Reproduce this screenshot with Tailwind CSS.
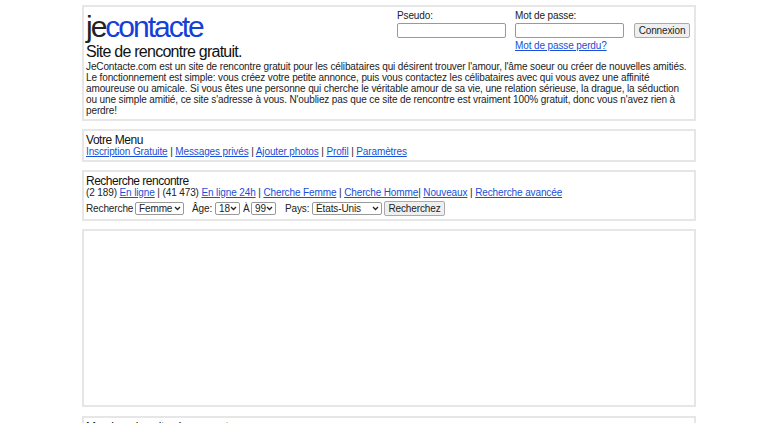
<!DOCTYPE html>
<html lang="fr">
  <head>
    <meta charset="UTF-8" />
    <title>JeContacte - Site de rencontre gratuit</title>
    <script src="https://cdn.jsdelivr.net/npm/@tailwindcss/browser@4"></script>
  </head>
  <body class="h-[423px] overflow-hidden bg-white font-['Liberation_Sans',Arial,sans-serif] text-[10px] tracking-[-0.12px] leading-[11px] text-[#222]">
    <div class="w-[614px] ml-[82px] pt-[5px] flex flex-col">
      <!-- Intro -->
      <div class="h-[116px] border-2 border-[#e6e6e6] px-[2px] mb-[8px]">
        <div class="flex justify-between h-[54px]">
          <div>
            <div class="text-[30px] leading-[34px] mt-[3px] tracking-[-2px] text-[#222]">je<span class="text-[#1440d8]">contacte</span></div>
            <h1 class="text-[16px] leading-[16px] tracking-[-0.75px] text-[#111]">Site de rencontre gratuit.</h1>
          </div>
          <form class="flex mr-[2px] pt-[2px]">
            <div class="w-[118px]">
              <label class="block h-[14px] leading-[13px]">Pseudo:</label>
              <input type="text" class="block w-[109px] h-[15px] bg-white border border-[#999] rounded-[2px]" />
            </div>
            <div class="w-[119px]">
              <label class="block h-[14px] leading-[13px]">Mot de passe:</label>
              <input type="password" class="block w-[109px] h-[15px] bg-white border border-[#999] rounded-[2px]" />
              <a href="#" class="block mt-[1px] leading-[13px] text-[#1a4fd8] underline">Mot de passe perdu?</a>
            </div>
            <div class="pt-[14px]">
              <button type="button" class="block w-[56px] h-[15px] bg-[#efefef] border border-[#aaa] rounded-[2px] text-[10px] leading-[13px] text-[#222]">Connexion</button>
            </div>
          </form>
        </div>
        <p class="w-[605px] leading-[11px]">JeContacte.com est un site de rencontre gratuit pour les célibataires qui désirent trouver l'amour, l'âme soeur ou créer de nouvelles amitiés. Le fonctionnement est simple: vous créez votre petite annonce, puis vous contactez les célibataires avec qui vous avez une affinité amoureuse ou amicale. Si vous êtes une personne qui cherche le véritable amour de sa vie, une relation sérieuse, la drague, la séduction ou une simple amitié, ce site s'adresse à vous. N'oubliez pas que ce site de rencontre est vraiment 100% gratuit, donc vous n'avez rien à perdre!</p>
      </div>

      <!-- Menu -->
      <div class="h-[33px] border-2 border-[#e6e6e6] px-[2px] mb-[8px]">
        <h2 class="text-[12px] leading-[12px] mt-[3px] tracking-[-0.45px] text-[#111]">Votre Menu</h2>
        <div class="leading-[12px]">
          <a href="#" class="text-[#1a4fd8] underline">Inscription Gratuite</a> | <a href="#" class="text-[#1a4fd8] underline">Messages privés</a> | <a href="#" class="text-[#1a4fd8] underline">Ajouter photos</a> | <a href="#" class="text-[#1a4fd8] underline">Profil</a> | <a href="#" class="text-[#1a4fd8] underline">Paramètres</a>
        </div>
      </div>

      <!-- Search -->
      <div class="h-[51px] border-2 border-[#e6e6e6] px-[2px] mb-[8px]">
        <h2 class="text-[12px] leading-[12px] mt-[3px] tracking-[-0.5px] text-[#111]">Recherche rencontre</h2>
        <div class="leading-[12px]">
          (2 189) <a href="#" class="text-[#1a4fd8] underline">En ligne</a> | (41 473) <a href="#" class="text-[#1a4fd8] underline">En ligne 24h</a> | <a href="#" class="text-[#1a4fd8] underline">Cherche Femme</a> | <a href="#" class="text-[#1a4fd8] underline">Cherche Homme</a>| <a href="#" class="text-[#1a4fd8] underline">Nouveaux</a> | <a href="#" class="text-[#1a4fd8] underline">Recherche avancée</a>
        </div>
        <form class="flex items-center mt-[2px] h-[15px]">
          <span class="w-[47px]">Recherche</span>
          <div class="relative ml-[2px] w-[49px] h-[13px]">
            <select class="block w-full h-full appearance-none pl-[3px] text-[10px] leading-[11px] bg-white border border-[#999] rounded-[2px]"><option>Femme</option></select>
            <svg class="absolute right-[3px] top-[4px] w-[7px] h-[5px]" viewBox="0 0 7 5" fill="none" stroke="#222" stroke-width="1.3"><path d="M1 1l2.5 2.5L6 1" /></svg>
          </div>
          <span class="ml-[8px] w-[20px]">Âge:</span>
          <div class="relative ml-[3px] w-[25px] h-[13px]">
            <select class="block w-full h-full appearance-none pl-[3px] text-[10px] leading-[11px] bg-white border border-[#999] rounded-[2px]"><option>18</option></select>
            <svg class="absolute right-[3px] top-[4px] w-[7px] h-[5px]" viewBox="0 0 7 5" fill="none" stroke="#222" stroke-width="1.3"><path d="M1 1l2.5 2.5L6 1" /></svg>
          </div>
          <span class="ml-[3px] w-[6px]">À</span>
          <div class="relative ml-[2px] w-[25px] h-[13px]">
            <select class="block w-full h-full appearance-none pl-[3px] text-[10px] leading-[11px] bg-white border border-[#999] rounded-[2px]"><option>99</option></select>
            <svg class="absolute right-[3px] top-[4px] w-[7px] h-[5px]" viewBox="0 0 7 5" fill="none" stroke="#222" stroke-width="1.3"><path d="M1 1l2.5 2.5L6 1" /></svg>
          </div>
          <span class="ml-[9px] w-[24px]">Pays:</span>
          <div class="relative ml-[3px] w-[70px] h-[13px]">
            <select class="block w-full h-full appearance-none pl-[3px] text-[10px] leading-[11px] bg-white border border-[#999] rounded-[2px]"><option>États-Unis</option></select>
            <svg class="absolute right-[3px] top-[4px] w-[7px] h-[5px]" viewBox="0 0 7 5" fill="none" stroke="#222" stroke-width="1.3"><path d="M1 1l2.5 2.5L6 1" /></svg>
          </div>
          <button type="button" class="ml-[2px] w-[61px] h-[15px] bg-[#efefef] border border-[#aaa] rounded-[2px] text-[10px] leading-[13px] text-[#222]">Recherchez</button>
        </form>
      </div>

      <!-- Ad slot -->
      <div class="h-[178px] border-2 border-[#e6e6e6] mb-[9px]"></div>

      <!-- Next section, cut off by the window -->
      <div class="h-[60px] border-2 border-[#e6e6e6] px-[2px]">
        <h2 class="text-[12px] leading-[12px] mt-[3px] tracking-[-0.45px] text-[#111]">Membres inscrits récemment</h2>
      </div>
    </div>
  </body>
</html>
